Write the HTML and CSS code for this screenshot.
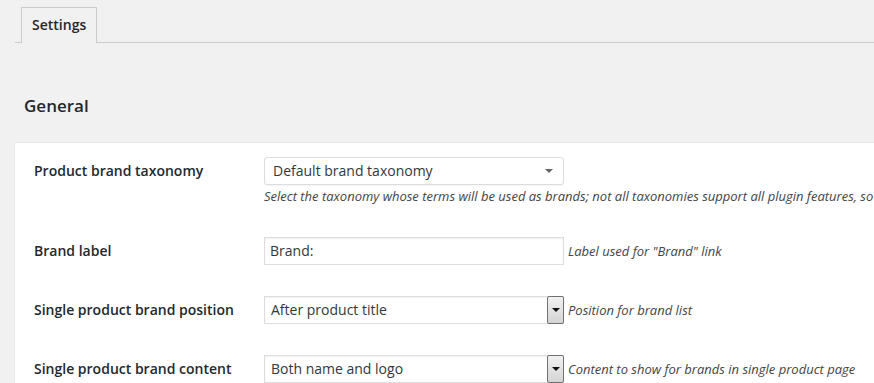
FILE: index.html
```html
<!DOCTYPE html>
<html lang="en">
<head>
    <meta charset="UTF-8">
    <title>Settings</title>
    <link rel="stylesheet" href="styles.css">
</head>
<body>
    <div class="nav-tabs">
        <a class="nav-tab active" href="#">Settings</a>
    </div>

    <h2 class="section-title">General</h2>

    <div class="panel">
        <div class="row">
            <div class="label">Product brand taxonomy</div>
            <div class="field">
                <div class="select modern">
                    <span>Default brand taxonomy</span>
                    <span class="arrow"></span>
                </div>
                <p class="desc block">Select the taxonomy whose terms will be used as brands; not all taxonomies support all plugin features, so</p>
            </div>
        </div>

        <div class="row">
            <div class="label">Brand label</div>
            <div class="field inline">
                <div class="input">Brand:</div>
                <span class="desc">Label used for "Brand" link</span>
            </div>
        </div>

        <div class="row">
            <div class="label">Single product brand position</div>
            <div class="field inline">
                <div class="select classic">
                    <span>After product title</span>
                    <span class="drop-btn"><span class="arrow dark"></span></span>
                </div>
                <span class="desc">Position for brand list</span>
            </div>
        </div>

        <div class="row">
            <div class="label">Single product brand content</div>
            <div class="field inline">
                <div class="select classic">
                    <span>Both name and logo</span>
                    <span class="drop-btn"><span class="arrow dark"></span></span>
                </div>
                <span class="desc">Content to show for brands in single product page</span>
            </div>
        </div>
    </div>
</body>
</html>
```

FILE: styles.css
```css
/* Reset */
* {
    margin: 0;
    padding: 0;
    box-sizing: border-box;
}

body {
    font-family: 'Open Sans', sans-serif;
    background-color: #f1f1f1;
    color: #23282d;
    font-size: 13px;
    overflow: hidden;
    padding-top: 7px;
}

/* Tabs */
.nav-tabs {
    margin-left: 15px;
    padding-left: 6px;
    border-bottom: 1px solid #ccc;
    display: flex;
}

.nav-tab {
    display: block;
    border: 1px solid #ccc;
    border-bottom: none;
    background-color: #f1f1f1;
    margin-bottom: -1px;
    padding: 5px 10px 6px;
    height: 36px;
    line-height: 24px;
    font-size: 14px;
    font-weight: 600;
    color: #23282d;
    text-decoration: none;
}

.section-title {
    font-size: 17px;
    font-weight: 600;
    margin: 50px 0 0 24px;
    line-height: 26px;
}

/* Panel */
.panel {
    background-color: #fff;
    margin: 23px 0 0 14px;
    padding-left: 19px;
    border-top: 1px solid #e8e8e8;
    border-left: 1px solid #e8e8e8;
    min-height: 300px;
}

.row {
    display: flex;
    padding: 14px 0 17px;
}

.label {
    width: 230px;
    flex-shrink: 0;
    font-size: 14px;
    font-weight: 600;
    line-height: 28px;
    color: #23282d;
}

.field {
    flex: 1;
    min-width: 0;
}

.field.inline {
    display: flex;
    align-items: center;
}

.select, .input {
    width: 300px;
    height: 28px;
    border: 1px solid #ddd;
    background-color: #fff;
    font-size: 14px;
    line-height: 26px;
    color: #32373c;
    display: flex;
    align-items: center;
    flex-shrink: 0;
}

.select.modern {
    border-radius: 3px;
    padding: 0 8px;
    justify-content: space-between;
    box-shadow: 0 1px 1px rgba(0, 0, 0, 0.04);
}

.select.modern .arrow {
    margin-right: 2px;
}

.select.classic {
    padding-left: 6px;
    justify-content: space-between;
    border-right: none;
    box-shadow: inset 0 1px 2px rgba(0, 0, 0, 0.05);
}

.input {
    padding-left: 5px;
    box-shadow: inset 0 1px 2px rgba(0, 0, 0, 0.07);
}

.arrow {
    width: 0;
    height: 0;
    border-left: 4px solid transparent;
    border-right: 4px solid transparent;
    border-top: 4px solid #666;
}

.arrow.dark {
    border-top-color: #111;
}

.drop-btn {
    width: 17px;
    height: 28px;
    margin-top: -1px;
    margin-bottom: -1px;
    border: 1px solid #707070;
    border-radius: 2px;
    background: linear-gradient(#f2f2f2, #d4d4d4);
    display: flex;
    align-items: center;
    justify-content: center;
}

.desc {
    font-style: italic;
    font-size: 13px;
    color: #444;
    margin-left: 4px;
    white-space: nowrap;
}

.desc.block {
    display: block;
    margin: 2px 0 0;
    line-height: 19px;
}
```
